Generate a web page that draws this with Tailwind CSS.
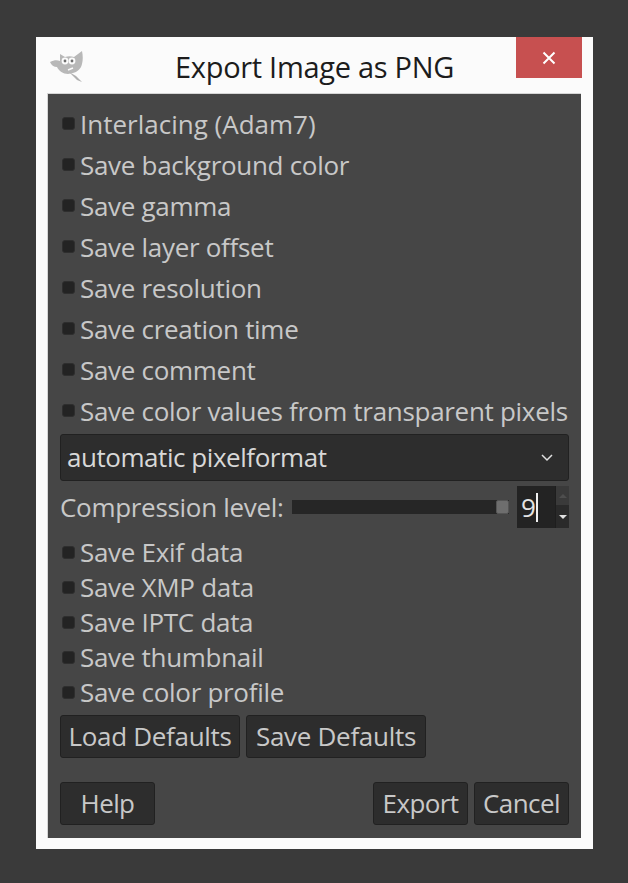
<!DOCTYPE html>
<html lang="en">
<head>
    <meta charset="UTF-8">
    <title>Export Image as PNG</title>
    <script src="https://cdn.jsdelivr.net/npm/@tailwindcss/browser@4"></script>
</head>
<body class="bg-[#3a3a3a] w-[628px] h-[883px] overflow-hidden font-['Open_Sans',sans-serif]">
    <div class="pt-[37px] pl-[36px]">
        <!-- window -->
        <div class="relative w-[557px] h-[812px] bg-[#fbfbfb] flex flex-col">
            <div class="h-[56px] flex items-center justify-center text-[#1c1c1c] text-[29px] tracking-[-0.3px] pt-[3px]">Export Image as PNG</div>
            <svg class="absolute left-[12px] top-[11px]" width="36" height="36" viewBox="0 0 36 36">
                <path d="M2 14 C6 12 9 12 12 13 L12 6 L17 9 C20 8 23 8 26 9 L34 3 C35 8 35 12 34 16 C33 21 29 24 25 25 L20 26 C15 26 11 23 9 19 C6 19 3 17 2 14 Z" fill="#b8b8b8"/>
                <path d="M21 24 L28 28 L34 34 L29 32 Z" fill="#b0b0b0"/>
                <path d="M20 22 L25 20" stroke="#fbfbfb" stroke-width="1.500"/>
                <circle cx="17" cy="13" r="3.400" fill="#fbfbfb"/>
                <circle cx="24" cy="13" r="3.400" fill="#fbfbfb"/>
                <circle cx="17" cy="13" r="1.400" fill="#707070"/>
                <circle cx="24" cy="13" r="1.400" fill="#707070"/>
            </svg>
            <div class="absolute left-[480px] top-0 w-[66px] h-[41px] bg-[#c75050] flex items-center justify-center">
                <svg width="14" height="14" viewBox="0 0 14 14"><path d="M1.500 1.500 L12.500 12.500 M12.500 1.500 L1.500 12.500" stroke="#fff" stroke-width="2"/></svg>
            </div>
            <!-- dialog body -->
            <div class="ml-[11px] w-[534px] h-[745px] bg-[#464646] border-t border-l border-[#d6d6d6] flex flex-col pt-[10px] pl-[12px] pr-[11px] text-[#c8c8c8] text-[26px] tracking-[-0.3px]">
                <div class="h-[41px] flex items-center tracking-[0px]"><span class="w-[13px] h-[13px] ml-[2px] mr-[5px] mb-[2px] rounded-[3px] bg-[#232323] border border-[#2e2e2e]"></span>Interlacing (Adam7)</div>
                <div class="h-[41px] flex items-center"><span class="w-[13px] h-[13px] ml-[2px] mr-[5px] mb-[2px] rounded-[3px] bg-[#232323] border border-[#2e2e2e]"></span>Save background color</div>
                <div class="h-[41px] flex items-center"><span class="w-[13px] h-[13px] ml-[2px] mr-[5px] mb-[2px] rounded-[3px] bg-[#232323] border border-[#2e2e2e]"></span>Save gamma</div>
                <div class="h-[41px] flex items-center"><span class="w-[13px] h-[13px] ml-[2px] mr-[5px] mb-[2px] rounded-[3px] bg-[#232323] border border-[#2e2e2e]"></span>Save layer offset</div>
                <div class="h-[41px] flex items-center"><span class="w-[13px] h-[13px] ml-[2px] mr-[5px] mb-[2px] rounded-[3px] bg-[#232323] border border-[#2e2e2e]"></span>Save resolution</div>
                <div class="h-[41px] flex items-center"><span class="w-[13px] h-[13px] ml-[2px] mr-[5px] mb-[2px] rounded-[3px] bg-[#232323] border border-[#2e2e2e]"></span>Save creation time</div>
                <div class="h-[41px] flex items-center"><span class="w-[13px] h-[13px] ml-[2px] mr-[5px] mb-[2px] rounded-[3px] bg-[#232323] border border-[#2e2e2e]"></span>Save comment</div>
                <div class="h-[41px] flex items-center whitespace-nowrap"><span class="w-[13px] h-[13px] ml-[2px] mr-[5px] mb-[2px] rounded-[3px] bg-[#232323] border border-[#2e2e2e]"></span>Save color values from transparent pixels</div>

                <div class="mt-[2px] h-[47px] w-[509px] rounded-[3px] bg-[#2d2d2d] border border-[#212121] flex items-center justify-between pl-[6px] pr-[15px] text-[#d8d8d8] tracking-[-0.45px]">
                    <span>automatic pixelformat</span>
                    <svg width="12" height="8" viewBox="0 0 12 8"><path d="M1 1 L6 6 L11 1" fill="none" stroke="#e0e0e0" stroke-width="1.500"/></svg>
                </div>

                <div class="mt-[5px] h-[42px] flex items-center">
                    <span class="w-[232px] whitespace-nowrap">Compression level:</span>
                    <div class="w-[217px] h-[14px] bg-[#262626] flex justify-end">
                        <span class="w-[13px] h-[14px] rounded-[2px] bg-[#6e6e6e] border border-[#555]"></span>
                    </div>
                    <div class="ml-[8px] w-[52px] h-[42px] flex bg-[#232323]">
                        <div class="w-[38px] pl-[4px] flex items-center text-[#e4e4e4]">9<span class="w-[2px] h-[29px] bg-[#f0f0f0]"></span></div>
                        <div class="w-[14px] flex flex-col bg-[#2a2a2a] border-l border-[#1e1e1e]">
                            <div class="h-[19px] bg-[#3a3a3a] flex items-center justify-center"><span class="w-0 h-0 border-x-[4px] border-x-transparent border-b-[4px] border-b-[#4e4e4e]"></span></div>
                            <div class="flex-1 flex items-center justify-center"><span class="w-0 h-0 border-x-[4px] border-x-transparent border-t-[4px] border-t-[#e0e0e0]"></span></div>
                        </div>
                    </div>
                </div>

                <div class="mt-[7px] h-[35px] flex items-center"><span class="w-[13px] h-[13px] ml-[2px] mr-[5px] mb-[1px] rounded-[3px] bg-[#232323] border border-[#2e2e2e]"></span>Save Exif data</div>
                <div class="h-[35px] flex items-center"><span class="w-[13px] h-[13px] ml-[2px] mr-[5px] mb-[1px] rounded-[3px] bg-[#232323] border border-[#2e2e2e]"></span>Save XMP data</div>
                <div class="h-[35px] flex items-center"><span class="w-[13px] h-[13px] ml-[2px] mr-[5px] mb-[1px] rounded-[3px] bg-[#232323] border border-[#2e2e2e]"></span>Save IPTC data</div>
                <div class="h-[35px] flex items-center"><span class="w-[13px] h-[13px] ml-[2px] mr-[5px] mb-[1px] rounded-[3px] bg-[#232323] border border-[#2e2e2e]"></span>Save thumbnail</div>
                <div class="h-[35px] flex items-center"><span class="w-[13px] h-[13px] ml-[2px] mr-[5px] mb-[1px] rounded-[3px] bg-[#232323] border border-[#2e2e2e]"></span>Save color profile</div>

                <div class="mt-[5px] flex gap-[6px]">
                    <button class="w-[180px] h-[43px] rounded-[3px] bg-[#2d2d2d] border border-[#212121] tracking-[-0.3px] whitespace-nowrap">Load Defaults</button>
                    <button class="w-[180px] h-[43px] rounded-[3px] bg-[#2d2d2d] border border-[#212121] tracking-[-0.3px] whitespace-nowrap">Save Defaults</button>
                </div>

                <div class="mt-[24px] w-[509px] flex gap-[6px]">
                    <button class="w-[95px] h-[43px] mr-auto rounded-[3px] bg-[#2d2d2d] border border-[#212121] tracking-[-0.6px]">Help</button>
                    <button class="w-[95px] h-[43px] rounded-[3px] bg-[#2d2d2d] border border-[#212121] tracking-[-0.6px]">Export</button>
                    <button class="w-[95px] h-[43px] rounded-[3px] bg-[#2d2d2d] border border-[#212121] tracking-[-0.6px]">Cancel</button>
                </div>
            </div>
        </div>
    </div>
</body>
</html>
